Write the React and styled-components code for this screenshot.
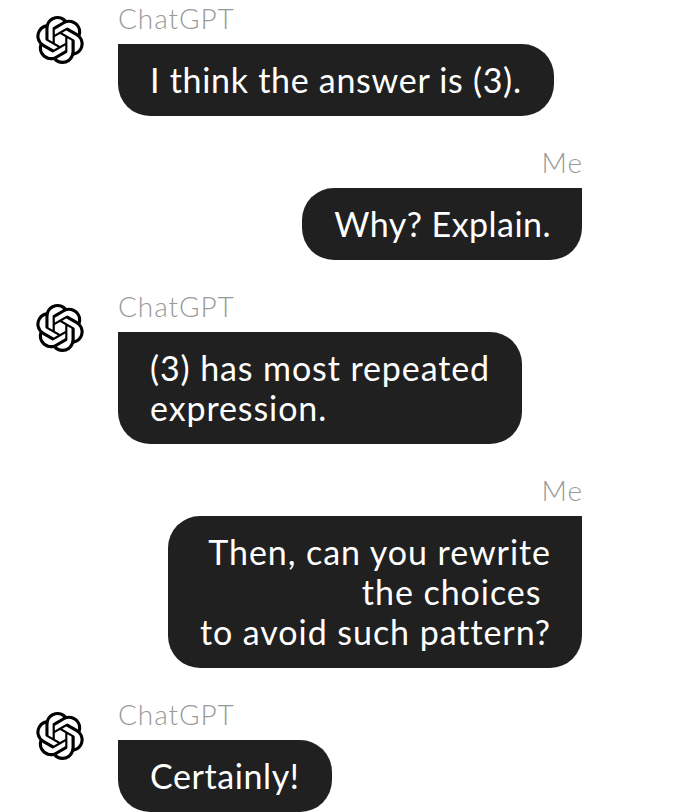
import React from 'react';
import styled, { createGlobalStyle } from 'styled-components';
import { SiOpenai } from 'react-icons/si';

const Global = createGlobalStyle`
  html, body { margin: 0; padding: 0; background: #fff; }
  body { font-family: "Lato", "Liberation Sans", sans-serif; }
`;
const Thread = styled.div`
  width: 700px; height: 812px; overflow: hidden; box-sizing: border-box;
  padding: 0 118px 0 36px; display: flex; flex-direction: column; gap: 28px;
`;
const Row = styled.div`
  display: flex; gap: 34px; justify-content: ${p => p.$me ? 'flex-end' : 'flex-start'};
`;
const Logo = styled.div`
  width: 48px; height: 48px; margin-top: 16px; flex: none; color: #000; display: flex;
`;
const Column = styled.div`
  display: flex; flex-direction: column; align-items: ${p => p.$me ? 'flex-end' : 'flex-start'};
`;
const Label = styled.div`
  height: 44px; font-size: 28px; line-height: 36px; color: #999; font-weight: 300; letter-spacing: 0.9px;
  margin-right: ${p => p.$me ? '-1px' : '0'};
`;
const Bubble = styled.div`
  background: #202020; color: #fff; font-size: 34px; line-height: 40px;
  padding: ${p => p.$me ? '16px 31px 16px 32px' : '16px 32px'};
  letter-spacing: ${p => p.$track}px;
  text-align: ${p => p.$me ? 'right' : 'left'}; white-space: pre;
  border-radius: ${p => p.$me ? '32px 0 32px 32px' : '0 32px 32px 32px'};
`;
const Msg = ({ me, track = 0.71, children }) => (
  <Row $me={me}>
    {!me && <Logo><SiOpenai size={48} /></Logo>}
    <Column $me={me}>
      <Label $me={me}>{me ? 'Me' : 'ChatGPT'}</Label>
      <Bubble $me={me} $track={track}>{children}</Bubble>
    </Column>
  </Row>
);
export default function App() {
  return (
    <>
      <Global />
      <Thread>
        <Msg>I think the answer is (3).</Msg>
        <Msg me track={0.46}>Why? Explain.</Msg>
        <Msg track={0.9}>{'(3) has most repeated\nexpression.'}</Msg>
        <Msg me track={0.95}>{'Then, can you rewrite\nthe choices \nto avoid such pattern?'}</Msg>
        <Msg track={0.6}>Certainly!</Msg>
      </Thread>
    </>
  );
}
